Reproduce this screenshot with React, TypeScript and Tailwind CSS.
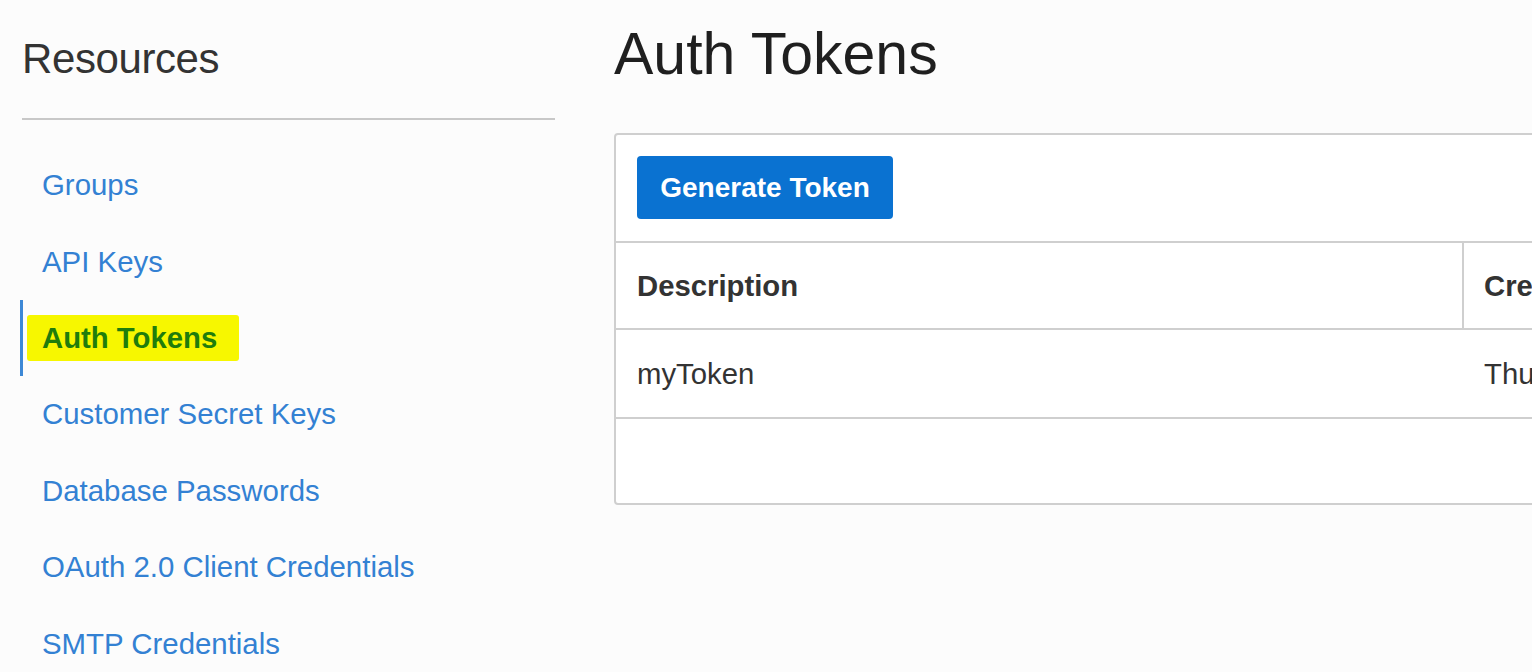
import React from "react";

const navItems = [
  "Groups",
  "API Keys",
  "Auth Tokens",
  "Customer Secret Keys",
  "Database Passwords",
  "OAuth 2.0 Client Credentials",
  "SMTP Credentials",
];

export default function App() {
  return (
    <div
      className="flex h-[672px] w-full overflow-hidden bg-[#fcfcfc]"
      style={{ fontFamily: '"Liberation Sans", Arial, sans-serif' }}
    >
      {/* Left column */}
      <aside className="ml-[22px] w-[533px] shrink-0">
        <h2 className="pt-[38px] text-[42px] leading-[42px] font-normal tracking-[-0.4px] text-[#333333]">
          Resources
        </h2>
        <div className="mt-[38px] h-[2px] w-full bg-[#c8c8c8]" />
        <nav className="mt-[27px] flex flex-col">
          {navItems.map((item) =>
            item === "Auth Tokens" ? (
              <div
                key={item}
                className="-ml-[2px] flex h-[76.4px] items-center border-l-[3px] border-[#3d88d6] pl-[19px]"
              >
                <span className="-ml-[15px] inline-block rounded-[3px] bg-[#f7f700] pl-[15px] pr-[22px] text-[29.3px] leading-[46px] font-bold text-[#1f7d0c]">
                  Auth Tokens
                </span>
              </div>
            ) : (
              <div
                key={item}
                className="flex h-[76.4px] items-center whitespace-nowrap pl-[20px] text-[29.4px] leading-[34px] text-[#3381d3]"
              >
                {item}
              </div>
            )
          )}
        </nav>
      </aside>

      {/* Main */}
      <main className="ml-[59px] min-w-0 flex-1 overflow-hidden">
        <h1 className="pt-[25px] text-[59px] leading-[58px] font-normal text-[#1f1f1f]">
          Auth Tokens
        </h1>
        <div className="mt-[50px] w-[1100px] rounded-[4px] border-2 border-[#cfcfcf] bg-white">
          <div className="border-b-2 border-[#cfcfcf] px-[21px] pt-[21px] pb-[22px]">
            <button className="flex h-[63px] w-[256px] items-center justify-center rounded-[4px] bg-[#0a72d1] text-[28px] font-bold text-white">
              Generate Token
            </button>
          </div>
          <div className="grid grid-cols-[846px_1fr] border-b-2 border-[#cfcfcf] text-[29.3px] font-bold text-[#333333]">
            <div className="flex h-[85px] items-center pl-[21px]">Description</div>
            <div className="flex h-[85px] items-center whitespace-nowrap border-l-2 border-[#cfcfcf] pl-[20px]">
              Created
            </div>
          </div>
          <div className="grid grid-cols-[846px_1fr] border-b-2 border-[#cfcfcf] text-[29.3px] text-[#333333]">
            <div className="flex h-[87px] items-center pl-[21px]">myToken</div>
            <div className="flex h-[87px] items-center whitespace-nowrap pl-[22px]">
              Thu, Jan 1, 2020
            </div>
          </div>
          <div className="h-[84px]" />
        </div>
      </main>
    </div>
  );
}
